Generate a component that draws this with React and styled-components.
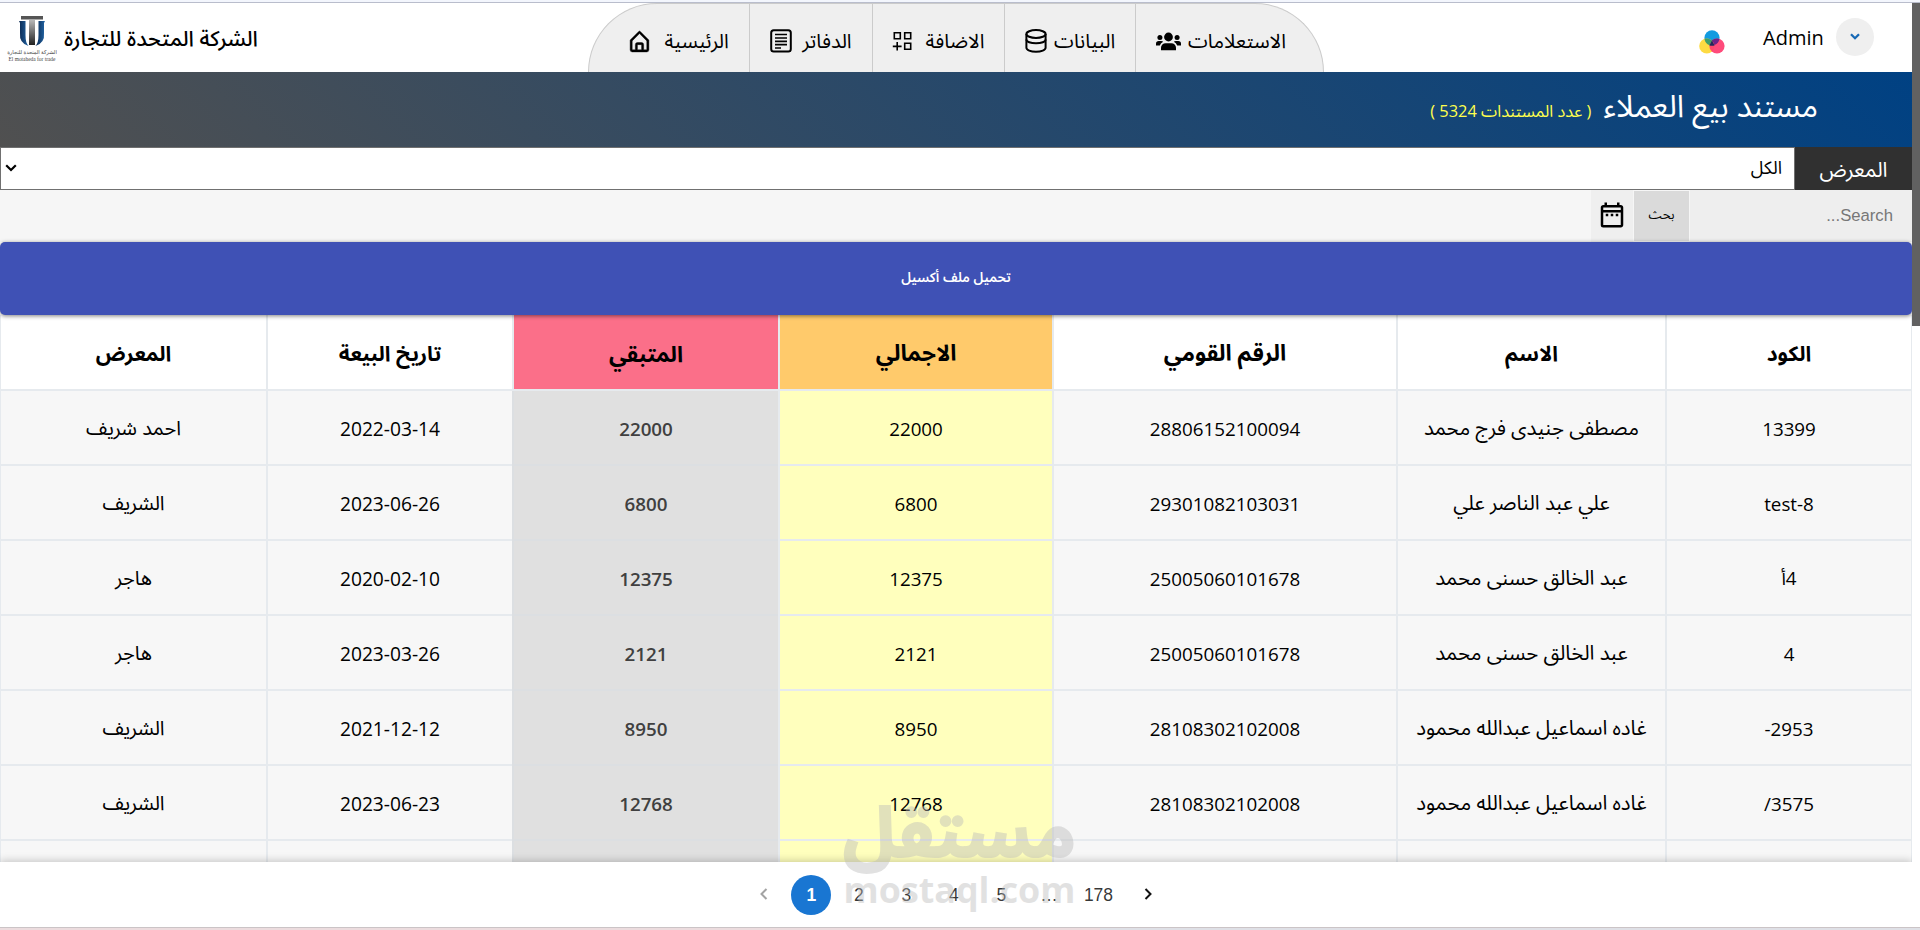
import React, { useState } from "react";
import styled, { createGlobalStyle } from "styled-components";
import { BiHomeAlt } from "react-icons/bi";
import { MdOutlineDateRange } from "react-icons/md";

const navItems = [
  { label: "الاستعلامات", width: 188, text: 96, gap: 9, end: 37, icon: "users" },
  { label: "البيانات", width: 131, text: 58, gap: 10, end: 20, icon: "data" },
  { label: "الاضافة", width: 133, text: 60, gap: 12, end: 20, icon: "add" },
  { label: "الدفاتر", width: 123, text: 50, gap: 10, end: 20, icon: "book" },
  { label: "الرئيسية", width: 160, text: 63, gap: 14, end: 20, icon: "home" },
];

const columns = ["الكود", "الاسم", "الرقم القومي", "الاجمالي", "المتبقي", "تاريخ البيعة", "المعرض"];

const rows = [
  ["13399", "مصطفى جنيدى فرج محمد", "28806152100094", "22000", "22000", "2022-03-14", "احمد شريف"],
  ["test-8", "علي عبد الناصر علي", "29301082103031", "6800", "6800", "2023-06-26", "الشريف"],
  ["4أ", "عبد الخالق حسنى محمد", "25005060101678", "12375", "12375", "2020-02-10", "هاجر"],
  ["4", "عبد الخالق حسنى محمد", "25005060101678", "2121", "2121", "2023-03-26", "هاجر"],
  ["2953-", "غاده اسماعيل عبدالله محمود", "28108302102008", "8950", "8950", "2021-12-12", "الشريف"],
  ["3575/", "غاده اسماعيل عبدالله محمود", "28108302102008", "12768", "12768", "2023-06-23", "الشريف"],
  ["", "", "", "", "", "", ""],
];

const pages = ["1", "2", "3", "4", "5", "…", "178"];

function NavIcon({ name }) {
  if (name === "users")
    return (
      <svg width="25" height="19" viewBox="0 0 25 19" fill="currentColor">
        <circle cx="12.5" cy="5" r="4.4" />
        <circle cx="3.9" cy="5.6" r="2.5" />
        <circle cx="21.1" cy="5.6" r="2.5" />
        <path d="M5 18.2v-2.4a4.6 4.6 0 0 1 4.6-4.6h5.8a4.6 4.6 0 0 1 4.6 4.6v2.4z" />
        <path d="M0 13.4v-1.6a2.8 2.8 0 0 1 2.8-2.8h2.4q1.1 0 2 .8a6 6 0 0 0-3.4 3.6z" />
        <path d="M25 13.4v-1.6A2.8 2.8 0 0 0 22.200 9h-2.400q-1.100 0-2 .8a6 6 0 0 1 3.400 3.600z" />
      </svg>
    );
  if (name === "data")
    return (
      <svg width="22" height="24" viewBox="0 0 22 24" fill="none" stroke="currentColor" strokeWidth="2">
        <ellipse cx="11" cy="5" rx="9.6" ry="3.9" />
        <path d="M1.4 5v13.800c0 2.200 4.300 4 9.600 4s9.600-1.800 9.600-4V5" />
        <path d="M1.400 10.500c0 2.200 4.300 3.800 9.600 3.800s9.600-1.600 9.600-3.800" />
      </svg>
    );
  if (name === "home") return <HomeIcon size={25} />;
  if (name === "book")
    return (
      <svg width="22" height="24" viewBox="0 0 22 24" fill="none" stroke="currentColor" strokeWidth="2">
        <rect x="1.2" y="1.2" width="19.6" height="21.4" rx="2.5" />
        <path d="M5 5.5h12M5 9h12M5 12.3h12M5 15.6h12M5 19h6" strokeWidth="1.7" />
      </svg>
    );
  return (
    <svg width="20" height="20" viewBox="0 0 20 20" fill="none" stroke="currentColor" strokeWidth="1.6">
      <path d="M2.3 1.8h6v6h-6zM12.7 1.8h6v6h-6zM12.7 12.2h6v6h-6zM5.2 11v8.6M.8 15.4h8.8" />
    </svg>
  );
}

function Logo() {
  return (
    <svg width="52" height="50" viewBox="0 0 52 50">
      <defs>
        <linearGradient id="stem" x1="0" y1="0" x2="0" y2="1">
          <stop offset="0" stopColor="#b8b8b8" />
          <stop offset="1" stopColor="#222" />
        </linearGradient>
        <linearGradient id="wing" x1="0" y1="0" x2="1" y2="0">
          <stop offset="0" stopColor="#0a2850" />
          <stop offset="1" stopColor="#2265a5" />
        </linearGradient>
      </defs>
      <path d="M16 3h22v3.500H16z" fill="#555" />
      <path d="M24 7h6v25h-6z" fill="url(#stem)" />
      <path d="M14 8h6.500v14q0 8 3 11-9.500-3-8.500-13V10z" fill="url(#wing)" />
      <path d="M40 8h-6.500v14q0 8-3 11 9.500-3 8.500-13V10z" fill="url(#wing)" />
      <LogoText x="27" y="41" $size={5.2}>الشركة المتحدة للتجارة</LogoText>
      <LogoText x="27" y="47.500" $size={5.4}>El motaheda for trade</LogoText>
    </svg>
  );
}

export default function App() {
  const [page, setPage] = useState("1");

  return (
    <Container dir="rtl">
      <GlobalStyle />
      <TopStrip />
      <Body>
        <Page>
          <TopBar>
            <UserBox>
              <RoundButton>
                <svg width="10" height="7" viewBox="0 0 10 7" fill="none" stroke="#1769b5" strokeWidth="2.3">
                  <path d="M1 1.2l4 4 4-4" />
                </svg>
              </RoundButton>
              <UserName>Admin</UserName>
              <svg width="26" height="24" viewBox="0 0 26 24">
                <circle cx="13" cy="7.8" r="7.6" fill="#129be0" />
                <circle cx="7.8" cy="16" r="7.6" fill="#fdd835" fillOpacity=".93" />
                <circle cx="18" cy="16" r="7.6" fill="#ff3d71" fillOpacity=".93" />
                <path d="M7.8 8.4a7.6 7.6 0 0 1 5.8 2.7 7.6 7.6 0 0 0-3 4.1A7.6 7.6 0 0 1 5.5 8.8z" fill="#3f9d6b" />
                <path d="M18 8.4a7.6 7.6 0 0 0-5.2 2.2 7.6 7.6 0 0 1 2.6 4.3 7.6 7.6 0 0 0 5-6z" fill="#6d2386" />
                <path d="M13 10.6l2.6 4.8q-2.6.8-5.2 0z" fill="#20295c" />
              </svg>
            </UserBox>
            <Nav>
              {navItems.map((item) => (
                <NavItem key={item.icon} $width={item.width} $end={item.end} $gap={item.gap}>
                  <NavLabel $width={item.text}>{item.label}</NavLabel>
                  <NavIcon name={item.icon} />
                </NavItem>
              ))}
            </Nav>
            <Brand>
              <BrandName>الشركة المتحدة للتجارة</BrandName>
              <Logo />
            </Brand>
          </TopBar>

          <TitleBar>
            <Title>مستند بيع العملاء</Title>
            <Count>( عدد المستندات 5324 )</Count>
          </TitleBar>

          <FilterRow>
            <FilterLabel>المعرض</FilterLabel>
            <SelectBox>
              <span>الكل</span>
              <svg width="12" height="8" viewBox="0 0 12 8" fill="none" stroke="#000" strokeWidth="2.2">
                <path d="M1.2 1.2L6 6l4.8-4.8" />
              </svg>
            </SelectBox>
          </FilterRow>

          <SearchRow>
            <SearchInput placeholder="Search..." />
            <SearchButton>بحث</SearchButton>
            <DateButton>
              <MdOutlineDateRange size={30} />
            </DateButton>
          </SearchRow>

          <ExcelButton>تحميل ملف أكسيل</ExcelButton>

          <TableWrap>
            <Table>
              {columns.map((title, i) => (
                <HeadCell key={title} $col={i}>{title}</HeadCell>
              ))}
              {rows.map((row, r) =>
                row.map((value, i) => (
                  <Cell key={`${r}-${i}`} $col={i}>{value}</Cell>
                ))
              )}
            </Table>
          </TableWrap>

          <Footer dir="ltr">
            <Arrow $disabled>
              <svg width="8" height="12" viewBox="0 0 8 12"><path d="M6.5 1L1.5 6l5 5" /></svg>
            </Arrow>
            {pages.map((p) => (
              <PageItem key={p} $active={p === page} onClick={() => setPage(p)}>{p}</PageItem>
            ))}
            <Arrow>
              <svg width="8" height="12" viewBox="0 0 8 12"><path d="M1.5 1l5 5-5 5" /></svg>
            </Arrow>
          </Footer>
        </Page>
        <Scrollbar />
      </Body>
      <BottomStrip />
      <Watermark>
        <WatermarkName>مستقل</WatermarkName>
        <WatermarkSite dir="ltr">mostaql.com</WatermarkSite>
      </Watermark>
    </Container>
  );
}

const lines = "#e6eaee";
const headColors = { 3: "#ffca6b", 4: "#fb6f89" };
const cellColors = { 3: "#ffffbd", 4: "#e0e0e0" };
const headSizes = { 2: 22.6, 3: 22.6, 4: 22.3 };
const cellSizes = { 1: 20.4, 5: 19.2, 6: 20 };

const GlobalStyle = createGlobalStyle`
  * {
    box-sizing: border-box;
  }
  body {
    margin: 0;
    overflow: hidden;
    background: #fff;
    font-family: "Open Sans", "Noto Sans Arabic", "DejaVu Sans", sans-serif;
    color: #000;
  }
  svg {
    flex-shrink: 0;
  }
`;

const Container = styled.div`
  position: relative;
  display: flex;
  flex-direction: column;
  width: 1920px;
  height: 930px;
  overflow: hidden;
`;

const TopStrip = styled.div`
  height: 3px;
  flex-shrink: 0;
  background: #f3f6fd;
  border-bottom: 1px solid #b9bdcc;
`;

const BottomStrip = styled.div`
  height: 3px;
  flex-shrink: 0;
  border-top: 1px solid #cbc4c6;
  background: linear-gradient(to right, #ecdcde 0 1100px, #dfe0e6 1100px);
`;

const Body = styled.div`
  flex: 1;
  min-height: 0;
  display: flex;
  direction: ltr;
`;

const Page = styled.main`
  direction: rtl;
  width: 1912px;
  display: flex;
  flex-direction: column;
  overflow: hidden;
`;

const Scrollbar = styled.div`
  width: 8px;
  height: 323px;
  background: #616161;
`;

const TopBar = styled.header`
  display: grid;
  grid-template-columns: 588px 736px 588px;
  direction: ltr;
  height: 69px;
  flex-shrink: 0;
`;

const UserBox = styled.div`
  grid-column: 3;
  grid-row: 1;
  direction: rtl;
  display: flex;
  align-items: center;
  padding: 0 38px 2px 0;
  & > svg {
    margin: 10px 38px 0 0;
  }
`;

const RoundButton = styled.button`
  width: 38px;
  height: 38px;
  padding: 0;
  border: 0;
  border-radius: 50%;
  background: #efefef;
  display: flex;
  align-items: center;
  justify-content: center;
`;

const UserName = styled.span`
  margin: 2px 13px 0 0;
  font-size: 20px;
  width: 60px;
  direction: ltr;
`;

const Nav = styled.nav`
  grid-column: 2;
  grid-row: 1;
  direction: rtl;
  display: flex;
  border: 1px solid #cbcbcb;
  border-bottom: 0;
  border-radius: 70px 70px 0 0;
  background: #efefef;
  overflow: hidden;
`;

const NavItem = styled.a`
  width: ${(p) => p.$width}px;
  padding: 6px ${(p) => p.$end}px 0 0;
  display: flex;
  align-items: center;
  gap: ${(p) => p.$gap}px;
  border-left: 1px solid #cbcbcb;
  &:last-child {
    border-left: 0;
  }
`;

const NavLabel = styled.span`
  width: ${(p) => p.$width}px;
  font-size: 20px;
  line-height: 26px;
  white-space: nowrap;
`;

const HomeIcon = styled(BiHomeAlt)`
  stroke: currentColor;
  stroke-width: 0.4;
`;

const Brand = styled.div`
  grid-column: 1;
  grid-row: 1;
  direction: rtl;
  display: flex;
  align-items: center;
  justify-content: flex-end;
  gap: 7px;
  padding: 0 0 0 5px;
`;

const BrandName = styled.span`
  padding-top: 3px;
  font-size: 21.5px;
  font-weight: 500;
  white-space: nowrap;
`;

const LogoText = styled.text`
  font-family: "Liberation Serif", "DejaVu Sans", serif;
  font-size: ${(p) => p.$size}px;
  text-anchor: middle;
  fill: #444;
`;

const TitleBar = styled.section`
  height: 75px;
  flex-shrink: 0;
  display: flex;
  align-items: baseline;
  gap: 12px;
  padding: 11px 94px 0 0;
  background: linear-gradient(45deg, #505050, #004183);
`;

const Title = styled.h1`
  margin: 0;
  font-size: 31px;
  font-weight: 400;
  line-height: 44px;
  color: #fff;
`;

const Count = styled.span`
  font-size: 16.4px;
  color: #ffff4d;
`;

const FilterRow = styled.div`
  display: flex;
  height: 43px;
  flex-shrink: 0;
`;

const FilterLabel = styled.label`
  width: 117px;
  padding-top: 3px;
  background: #303030;
  color: #fff;
  font-size: 20.8px;
  display: flex;
  align-items: center;
  justify-content: center;
`;

const SelectBox = styled.div`
  flex: 1;
  border: 1px solid #707070;
  background: #fff;
  display: flex;
  align-items: center;
  justify-content: space-between;
  padding: 0 12px 2px 4px;
  font-size: 18px;
`;

const SearchRow = styled.div`
  display: flex;
  height: 52px;
  flex-shrink: 0;
  background: #f6f6f6;
`;

const SearchInput = styled.input`
  width: 222px;
  border: 0;
  padding: 0 19px;
  background: #eee;
  font-family: "Liberation Sans", Arial, sans-serif;
  font-size: 16.7px;
  &::placeholder {
    color: #777;
    opacity: 1;
  }
`;

const SearchButton = styled.button`
  width: 55px;
  margin: 1px;
  padding: 0 0 2px;
  border: 0;
  background: #dadada;
  font-family: "Liberation Sans", "Noto Sans Arabic", "DejaVu Sans", sans-serif;
  font-size: 13px;
`;

const DateButton = styled.button`
  width: 42px;
  padding: 0 0 3px;
  border: 0;
  background: #efefef;
  display: flex;
  align-items: center;
  justify-content: center;
`;

const ExcelButton = styled.button`
  position: relative;
  z-index: 1;
  height: 73px;
  flex-shrink: 0;
  padding-bottom: 3px;
  border: 0;
  border-radius: 5px;
  background: #3f51b5;
  color: #fff;
  font-family: "Liberation Sans", "Noto Sans Arabic", "DejaVu Sans", sans-serif;
  font-size: 13.5px;
  font-weight: 600;
  box-shadow: 0 1px 4px rgba(0, 0, 0, 0.5);
`;

const TableWrap = styled.div`
  flex: 1;
  min-height: 0;
  overflow: hidden;
`;

const Table = styled.div`
  display: grid;
  grid-template-columns: 246px 269px 344px 274px 266px 246px 267px;
  grid-template-rows: 76px;
  grid-auto-rows: 75px;
  border-right: 1px solid ${lines};
`;

const HeadCell = styled.div`
  display: flex;
  align-items: center;
  justify-content: center;
  padding-top: 4px;
  border-left: 2px solid ${lines};
  border-bottom: 2px solid ${lines};
  background: ${(p) => headColors[p.$col] || "#fff"};
  font-size: ${(p) => headSizes[p.$col] || 21}px;
  font-weight: 700;
`;

const Cell = styled.div`
  display: flex;
  align-items: center;
  justify-content: center;
  padding-top: 2px;
  border-left: 2px solid ${lines};
  border-bottom: 2px solid ${lines};
  background: ${(p) => cellColors[p.$col] || "#f7f7f7"};
  font-size: ${(p) => cellSizes[p.$col] || 18.8}px;
  white-space: nowrap;
  ${(p) => p.$col === 4 && `
    border-color: #dcdfe2;
    color: #404040;
    font-weight: 600;
  `}
`;

const Footer = styled.footer`
  position: relative;
  height: 65px;
  flex-shrink: 0;
  display: flex;
  align-items: center;
  justify-content: center;
  padding-top: 1px;
  background: #fff;
  box-shadow: 0 -1px 8px rgba(0, 0, 0, 0.22);
  font-family: "Liberation Sans", Arial, sans-serif;
`;

const PageItem = styled.button`
  min-width: 40px;
  height: 40px;
  margin: 0 3.75px;
  padding: 0 7.5px;
  border: 0;
  border-radius: 20px;
  background: ${(p) => (p.$active ? "#1976d2" : "transparent")};
  color: ${(p) => (p.$active ? "#fff" : "rgba(0, 0, 0, 0.8)")};
  font-family: inherit;
  font-size: 17.5px;
  font-weight: ${(p) => (p.$active ? 700 : 400)};
`;

const Arrow = styled.button`
  width: 40px;
  height: 40px;
  margin: 0 3.75px;
  padding: 0;
  border: 0;
  background: none;
  opacity: ${(p) => (p.$disabled ? 0.38 : 1)};
  path {
    fill: none;
    stroke: #111;
    stroke-width: 2;
  }
`;

const Watermark = styled.div`
  position: absolute;
  left: 845px;
  top: 792px;
  width: 229px;
  height: 130px;
  display: flex;
  flex-direction: column;
  align-items: center;
  color: #b9b9b9;
  opacity: 0.42;
  pointer-events: none;
  font-weight: 700;
`;

const WatermarkName = styled.span`
  font-size: 70px;
  line-height: 77px;
  white-space: nowrap;
  -webkit-text-stroke: 2px #b9b9b9;
`;

const WatermarkSite = styled.span`
  font-size: 35.8px;
  line-height: 40px;
`;
